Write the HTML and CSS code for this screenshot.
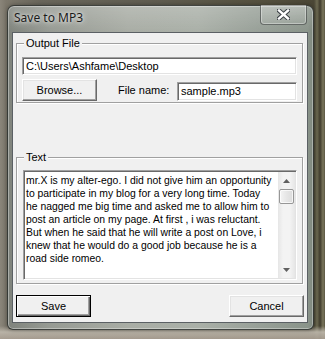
FILE: index.html
```html
<!DOCTYPE html>
<html>
<head>
<meta charset="utf-8">
<link rel="stylesheet" href="styles.css">
</head>
<body>
<div class="window">
  <div class="titlebar">
    <span class="title">Save to MP3</span>
    <div class="close">
      <svg width="13" height="11" viewBox="0 0 13 11">
        <path d="M2 1.5 L11 9.5 M11 1.5 L2 9.5" stroke="#3a3f44" stroke-width="4.4" stroke-linecap="square" fill="none"/>
        <path d="M2 1.5 L11 9.5 M11 1.5 L2 9.5" stroke="#ffffff" stroke-width="2.4" stroke-linecap="square" fill="none"/>
      </svg>
    </div>
  </div>
  <div class="client">
    <div class="group group-output">
      <div class="legend">Output File</div>
      <div class="input path">C:\Users\Ashfame\Desktop</div>
      <div class="row">
        <div class="button">Browse...</div>
        <span class="label">File name:</span>
        <div class="input filename">sample.mp3</div>
      </div>
    </div>
    <div class="group group-text">
      <div class="legend">Text</div>
      <div class="textarea">
        <div class="text">mr.X is my alter-ego. I did not give him an opportunity<br>to participate in my blog for a very long time. Today<br>he nagged me big time and asked me to allow him to<br>post an article on my page. At first , i was reluctant.<br>But when he said that he will write a post on Love, i<br>knew that he would do a good job because he is a<br>road side romeo.</div>
        <div class="scrollbar">
          <div class="arrow up"><svg width="7" height="4" viewBox="0 0 7 4"><path d="M0 4 L3.5 0 L7 4 Z" fill="#606060"/></svg></div>
          <div class="thumb"></div>
          <div class="track"></div>
          <div class="arrow down"><svg width="7" height="4" viewBox="0 0 7 4"><path d="M0 0 L3.5 4 L7 0 Z" fill="#606060"/></svg></div>
        </div>
      </div>
    </div>
    <div class="actions">
      <div class="button default">Save</div>
      <div class="button">Cancel</div>
    </div>
  </div>
</div>
</body>
</html>
```
FILE: styles.css
```css
html, body {
  margin: 0;
  padding: 0;
}
body {
  width: 325px;
  height: 339px;
  overflow: hidden;
  font-family: "Liberation Sans", Arial, sans-serif;
  font-size: 11px;
  color: #000;
  background:
    linear-gradient(180deg, rgba(0,0,0,0) 0, rgba(0,0,0,0) 326px, rgba(190,184,172,0.9) 332px, rgba(170,160,148,0.9) 339px),
    linear-gradient(90deg, #8a857a 0, #7d786c 6px, #6a675c 40px, #5f5c50 160px, #55513f 260px, #4b4736 314px, #6d6a52 317px, #3f3b2c 320px, #7a765c 323px, #5a5642 325px);
}
.window {
  box-sizing: border-box;
  margin: 5px 0 0 7px;
  width: 307px;
  height: 325px;
  border: 1px solid rgba(30, 32, 30, 0.75);
  border-radius: 7px 7px 6px 6px;
  padding: 0 5px 6px 4px;
  background:
    linear-gradient(180deg, rgba(255,255,255,0.18) 0, rgba(255,255,255,0) 26px),
    linear-gradient(90deg, #7f837c 0, #969a93 40px, #a9ada5 120px, #aab0a8 190px, #98a098 250px, #8a948a 300px, #7e877e 305px);
  box-shadow: inset 0 0 0 1px rgba(255,255,255,0.35), 0 0 4px rgba(0,0,0,0.35);
}
.titlebar {
  display: flex;
  align-items: flex-start;
  height: 26px;
  margin: 0 -5px 0 -4px;
  padding-left: 6px;
}
.title {
  font-family: "Noto Sans", "Open Sans", sans-serif;
  font-size: 12px;
  line-height: 16px;
  margin-top: 4px;
  color: #1b1b1b;
  text-shadow: 0 0 6px rgba(255,255,255,0.9), 0 0 3px rgba(255,255,255,0.6);
}
.close {
  box-sizing: border-box;
  margin: -1px 6px 0 auto;
  width: 47px;
  height: 20px;
  display: flex;
  align-items: center;
  justify-content: center;
  border: 1px solid rgba(40, 45, 45, 0.55);
  border-top: none;
  border-radius: 0 0 4px 4px;
  background: linear-gradient(180deg, rgba(255,255,255,0.25), rgba(255,255,255,0.08));
  box-shadow: inset 0 0 0 1px rgba(255,255,255,0.35);
}
.close svg {
  display: block;
}
.client {
  box-sizing: border-box;
  height: 291px;
  border: 1px solid #5b6064;
  background: #f0f0f0;
  padding: 0 4px 0 3px;
  display: flex;
  flex-direction: column;
}
.group {
  border: 1px solid #a0a0a0;
  box-shadow: inset 1px 1px 0 #fff, 1px 1px 0 #fff;
}
.legend {
  width: fit-content;
  line-height: 13px;
  margin: -7px 0 0 2px;
  padding: 0 2px;
  background: #f0f0f0;
}
.group-output {
  margin-top: 10px;
  padding: 0 5px 1px 5px;
}
.group-text {
  margin-top: 54px;
  padding: 0 5px 3px 6px;
}
.group-text .legend {
  margin-left: 1px;
}
.input {
  box-sizing: border-box;
  background: #fff;
  border: 1px solid;
  border-color: #a0a0a0 #fff #fff #a0a0a0;
  box-shadow: inset 1px 1px 0 #696969, inset -1px -1px 0 #e3e3e3;
  padding: 2px 3px;
  line-height: 13px;
  white-space: nowrap;
}
.path {
  margin-top: 7px;
  height: 18px;
}
.row {
  display: flex;
  align-items: flex-end;
  margin-top: 4px;
}
.label {
  line-height: 13px;
  margin: 0 0 4px 21px;
}
.filename {
  margin-left: auto;
  width: 120px;
  height: 19px;
}
.button {
  box-sizing: border-box;
  width: 75px;
  height: 22px;
  display: flex;
  align-items: center;
  justify-content: center;
  background: #f0f0f0;
  border: 1px solid;
  border-color: #fff #696969 #696969 #fff;
  box-shadow: inset -1px -1px 0 #a0a0a0, inset 1px 1px 0 #e3e3e3;
  line-height: 13px;
}
.button.default {
  border: 1px solid #000;
  box-shadow: inset 1px 1px 0 #fff, inset -1px -1px 0 #696969, inset -2px -2px 0 #a0a0a0;
}
.textarea {
  box-sizing: border-box;
  margin-top: 6px;
  height: 110px;
  display: flex;
  background: #fff;
  border: 1px solid;
  border-color: #a0a0a0 #fff #fff #a0a0a0;
  box-shadow: inset 1px 1px 0 #696969, inset -1px -1px 0 #e3e3e3;
  padding: 1px;
}
.text {
  flex: 1;
  padding: 2px 0 0 1px;
  font-size: 10.4px;
  line-height: 13px;
  white-space: nowrap;
  overflow: hidden;
}
.scrollbar {
  width: 17px;
  display: flex;
  flex-direction: column;
  background: linear-gradient(90deg, #e6e6e6, #f3f3f3 30%, #f3f3f3 70%, #e6e6e6);
}
.arrow {
  height: 17px;
  display: flex;
  align-items: center;
  justify-content: center;
}
.arrow svg {
  display: block;
}
.thumb {
  box-sizing: border-box;
  height: 15px;
  margin: 0 1px;
  border: 1px solid #979797;
  border-radius: 2px;
  background: linear-gradient(90deg, #f4f4f4, #e6e6e6 50%, #dcdcdc);
  box-shadow: inset 0 0 0 1px rgba(255,255,255,0.7);
}
.track {
  flex: 1;
}
.actions {
  display: flex;
  justify-content: space-between;
  margin: 11px -1px 0 0;
}
```
